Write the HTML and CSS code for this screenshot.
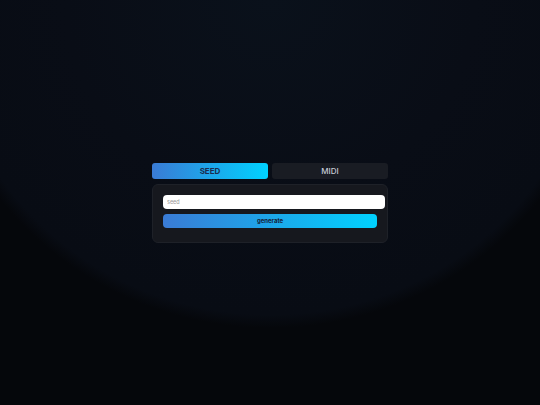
FILE: index.html
```html
<!DOCTYPE html>
<html>
<head>
<meta charset="utf-8">
<link rel="stylesheet" href="styles.css">
</head>
<body>
<div class="page">
  <div class="app">
    <div class="tabs">
      <button class="tab active">SEED</button>
      <button class="tab">MIDI</button>
    </div>
    <div class="panel">
      <input class="seed" type="text" placeholder="seed">
      <button class="generate">generate</button>
    </div>
  </div>
</div>
</body>
</html>
```
FILE: styles.css
```css
html, body {
  margin: 0;
  padding: 0;
  height: 100%;
}
body {
  background: radial-gradient(ellipse 340px 328px at 50% 0%, #0a111b 0%, #090d16 60%, #080c14 96%, #05070b 100%);
  background-color: #05070b;
  font-family: Inter, "Liberation Sans", sans-serif;
}
.page {
  height: 405px;
  display: flex;
  align-items: center;
  justify-content: center;
}
.app {
  width: 236px;
  display: flex;
  flex-direction: column;
  gap: 5px;
}
.tabs {
  display: flex;
  gap: 4px;
}
.tab {
  flex: 1;
  height: 16px;
  border: none;
  border-radius: 3px;
  background: #191c23;
  color: #c6cad4;
  font-family: Inter, "Liberation Sans", sans-serif;
  font-size: 8px;
  font-weight: 500;
  padding: 0;
}
.tab.active {
  background: linear-gradient(90deg, #3a7bd5, #00d2ff);
  color: #1b2d4e;
  font-weight: 700;
}
.panel {
  background: #16181e;
  border: 1px solid #1e2128;
  border-radius: 6px;
  padding: 10px 10px 14px 10px;
  display: flex;
  flex-direction: column;
  gap: 5px;
}
.seed {
  box-sizing: content-box;
  width: 100%;
  height: 14px;
  padding: 0 4px;
  border: none;
  border-radius: 4px;
  background: #ffffff;
  font-family: Inter, "Liberation Sans", sans-serif;
  font-size: 5.5px;
  color: #333;
  outline: none;
  margin: 0;
}
.seed::placeholder {
  color: #9a9a9a;
}
.generate {
  height: 14px;
  border: none;
  border-radius: 4px;
  background: linear-gradient(90deg, #3a7bd5, #00d2ff);
  color: #14213a;
  font-family: Inter, "Liberation Sans", sans-serif;
  font-size: 6px;
  font-weight: 700;
  padding: 0;
}
```
